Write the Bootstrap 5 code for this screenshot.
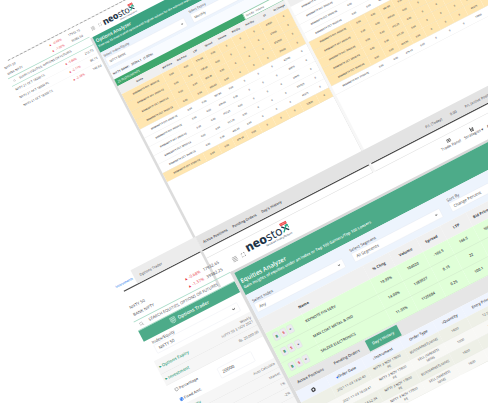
<!DOCTYPE html>
<html lang="en">
<head>
<meta charset="utf-8">
<title>neostox</title>
<link href="https://cdn.jsdelivr.net/npm/bootstrap@5.3.0/dist/css/bootstrap.min.css" rel="stylesheet">
<style>
html,body{width:488px;height:403px;overflow:hidden;background:#fff}
body{font-family:"Open Sans","Noto Sans",sans-serif;color:#3d4147;line-height:1.2}
.viewport{width:488px;height:403px}
/* both screens are laid out at four times size, then tilted and scaled */
.tilt{width:1900px;transform-origin:0 0;transform:matrix(.22215,-.11467,.11467,.22215,.38,63.95)}
.g{background:#3ba381;color:#fff}
.g2{background:#4dab89;color:#fff}
.down{color:#e8343f}
.topline{height:3px;margin-left:32px;background:repeating-linear-gradient(90deg,#999 0 12px,#ddd 12px 18px)}
.midline{height:5px;margin-left:22px;background:#4a4a4a}
.app1{height:969px}
.app2{height:1110px}
.side1{width:366px;padding:8px 10px 0 6px;font-size:12.2px}
.side2{width:434px}
.tick1{display:grid;grid-template-columns:200px 87px 1fr;height:26px;align-items:center}
.find{border-top:3px solid #a9dcc8;border-bottom:3px solid #a9dcc8}
.find1{height:37px;margin:3px -10px 0 -6px;padding-left:14px}
.watch{display:grid;grid-template-columns:222px 80px 1fr;height:35px;align-items:center;border-bottom:1px solid #eee}
.bar1{height:71px;padding-left:20px;padding-top:8px}
.brandname{font-family:"Noto Sans",sans-serif;letter-spacing:-.5px;color:#1e3448;line-height:1}
.brandname b{font-weight:800}
.edge{border-left:10px solid #dcdcdc}
.head1{height:70px;padding:9px 6px}
.head1 .t{font-size:19px;font-weight:600}
.head1 .s{font-size:11.3px;font-weight:600;white-space:nowrap}
.filt{background:#edf4fd}
.filt1{height:78px;padding:10px 6px 0;font-size:12.8px;gap:28px}
.filt1>div{width:354px}
.pick{background:#fff;border:1px solid #dbe0e8;border-radius:4px;color:#444}
.filt1 .pick{height:38px;padding:0 10px;margin-top:3px}
.info1{height:42px;padding-left:6px;background:#f8fbff;font-size:12px;font-weight:600}
.count{width:576px;height:30px;background:#3fa76d;color:#fff;font-size:12px;padding-left:8px}
.sortbox{width:172px;height:30px;border:2px solid #3fa76d;font-size:10.5px;background:#fff;padding-left:8px}
table.quotes{table-layout:fixed;border-collapse:collapse;width:748px;font-size:9.6px;font-weight:600}
.quotes th{height:36px;background:#efefef;font-weight:700;text-align:center;padding:0}
.quotes td{height:39.6px;padding:0;text-align:center;border-bottom:1px solid #e4e4e4}
.quotes td:first-child{text-align:left;padding-left:40px;white-space:nowrap}
.quotes tr.itm td{background:#ffe6b0;border-color:#e6d9b4}
.pane{height:776px;border-right:2px solid #ddd;border-bottom:2px solid #ddd}
.gut{width:10px;background:#f7f7f7}
.dock{height:60px;font-size:14.3px;font-weight:600}
.dock>div{padding-top:5px}
.dock .a{width:84px;color:#2f86ee;font-size:13px}
.dock .b{width:292px;background:#ececec;padding-left:24px;font-weight:400}
.dock .c{background:#e3e3e3;gap:23px;padding-left:18px}
.tick2{display:grid;grid-template-columns:245px 85px 1fr;height:32px;align-items:center;padding-left:12px;font-size:16.6px}
.find2{height:42px;margin-top:9px;padding-left:16px;font-size:16.1px;white-space:nowrap}
.trader{height:48px;font-size:19px;font-weight:600}
.idx{height:87px;padding:8px 32px 0 28px;font-size:17px}
.idx .pick{height:37px;padding:0 14px;margin-top:2px}
.acc{background:#f6f6f6;border-bottom:2px solid #e6e6e6;padding:0 8px;font-size:14.3px;color:#666}
.acc b{font-size:17px;color:#3ba381;font-weight:600}
.funds{height:97px;font-size:16px;padding:8px 72px 0 22px}
.ring{width:15px;height:15px;border:2px solid #777;border-radius:50%;background:#fff}
.ring.on{border-color:#2f78ee;background:#2f78ee;box-shadow:inset 0 0 0 2px #fff}
.amount{width:152px;height:44px;padding-left:14px;font-size:18px}
.bar2{height:125px;padding-left:30px}
.menuitem{font-size:15.8px;text-align:center;white-space:nowrap}
.edge2{border-left:14px solid #dcdcdc}
.edgetop{height:10px;background:#d9d9d9;margin-left:-14px}
.head2{height:100px;padding:26px 8px 0 8px}
.head2 .t{font-size:24.5px;font-weight:600}
.head2 .s{font-size:15.6px;font-weight:600;white-space:nowrap}
.filt2{height:110px;padding:23px 12px 0;gap:42px;font-size:16.5px}
.filt2>div{width:396px;flex:none}
.filt2 .pick{height:38px;padding:0 14px;margin-top:3px}
table.movers,table.orders{table-layout:fixed;border-collapse:collapse;width:1600px}
.movers{font-size:15px;font-weight:600}
.movers th{height:62px;background:#f0f0f0;padding:0;text-align:center;font-size:15.4px}
.movers td{height:67.3px;background:#e0ffd8;border-bottom:2px solid #cdebc6;padding:0 0 6px;text-align:center}
.movers th:nth-child(2),.movers td:nth-child(2){text-align:left}
.movers td:first-child{text-align:left;padding-left:22px}
.key{display:inline-block;width:25px;height:34px;line-height:32px;margin-right:6px;text-align:center;background:#ecebf0;border:1px solid #d2d2dc;border-radius:5px;font-size:15px;font-weight:700}
.tabs2{height:60px;background:#e6e6e6;font-size:15.4px;font-weight:600;padding-left:24px}
.tabs2 .on{height:48px;width:142px}
.orders{font-size:13.5px;line-height:1.45}
.orders th{height:48px;background:#eff4fe;padding:0;font-size:15px;text-align:center;font-weight:600}
.orders td{height:49px;padding:0;text-align:center;background:#f8f8f5;border-bottom:1px solid #e4e6de}
.orders tr:nth-child(odd) td{background:#eef0e7}
</style>
<script src="https://cdn.jsdelivr.net/npm/bootstrap@5.3.0/dist/js/bootstrap.bundle.min.js"></script>
</head>
<body>
<svg width="0" height="0" class="d-none">
  <symbol id="menu" viewBox="0 0 16 16"><path d="M1 2h14M1 6h14M1 10h14M1 14h14" stroke="#777" stroke-width="1.3"/></symbol>
  <symbol id="full" viewBox="0 0 16 16"><path d="M1 6V1h5M10 1h5v5M15 10v5h-5M6 15H1v-5" fill="none" stroke="#555" stroke-width="2"/></symbol>
  <symbol id="lens" viewBox="0 0 16 16"><circle cx="6.5" cy="6.5" r="5" fill="none" stroke="#888" stroke-width="1.3"/><path d="M10.5 10.5 15 15" stroke="#888" stroke-width="1.3"/></symbol>
  <symbol id="chev" viewBox="0 0 16 16"><path d="m2 5 6 6 6-6" fill="none" stroke="#333" stroke-width="2.4"/></symbol>
  <symbol id="xmark" viewBox="0 0 24 30"><path d="M3 10 20 28" stroke="#1e3448" stroke-width="4"/><path d="M3 28 21 9" stroke="#27a583" stroke-width="4"/><path d="M13 12h9v9" fill="none" stroke="#27a583" stroke-width="3"/><rect x="1" y="0" width="22" height="8" rx="2" fill="#ef4444"/><path d="M4 4h16" stroke="#ffd0d0" stroke-width="2" stroke-dasharray="3 1.5"/></symbol>
</svg>
<div class="viewport overflow-hidden">
<div class="tilt">
  <div class="topline"></div>
  <div class="app1 d-flex">
    <aside class="side1 flex-shrink-0">
      <div class="tick1"><span>NIFTY 50</span><span class="down">▲ &nbsp;-0.68%</span><span>17932.15</span></div>
      <div class="tick1"><span>BANK NIFTY</span><span class="down">▲ &nbsp;-1.00%</span><span>39382.50</span></div>
      <div class="find find1 d-flex align-items-center gap-2"><svg width="12" height="12"><use href="#lens"/></svg><span class="ms-2">SEARCH EQUITIES, OPTIONS OR FUTURES</span></div>
      <div class="watch"><span>NIFTY 21 OCT 18200 CE</span><span class="down">▲ -3.80%</span><span class="text-end">212.75</span></div>
      <div class="watch"><span>NIFTY 21 OCT 18000 PE</span><span class="down">▲ -2.11%</span><span class="text-end">86.15</span></div>
      <div class="watch border-0"><span>NIFTY 21 OCT 18300 CE</span><span class="down">▲ -2.38%</span><span class="text-end">146.60</span></div>
    </aside>
    <main class="flex-grow-1">
      <div class="bar1 d-flex align-items-center">
        <svg width="18" height="18" class="me-3"><use href="#menu"/></svg>
        <svg width="13" height="13" class="me-2"><use href="#full"/></svg>
        <div class="brandname" style="font-size:36px"><div class="d-flex align-items-end"><span><b>neo</b>sto</span><svg width="24" height="34" class="mb-1"><use href="#xmark"/></svg></div><div style="font-size:7px;text-align:right">Simulated Trading Platform</div></div>
      </div>
      <div class="edge" id="chain">
        <div class="head1 g"><div class="t">Options Analyzer</div><div class="s mt-1">View top 25 most traded options with highest volume for the selected expiry</div></div>
        <div class="filt filt1 d-flex">
          <div>Select Index/Equity<div class="pick d-flex align-items-center justify-content-between">NIFTY BANK<svg width="11" height="11"><use href="#chev"/></svg></div></div>
          <div>Select Expiry<div class="pick d-flex align-items-center justify-content-between">Monthly<svg width="11" height="11"><use href="#chev"/></svg></div></div>
        </div>
        <div class="info1 d-flex align-items-center">NIFTY BANK: &nbsp; 39394.1 &nbsp; (1.00%)</div>
        <div class="d-flex"><div class="count d-flex align-items-center">25 INSTRUMENTS</div><div class="sortbox d-flex align-items-center">Sort By : Volume</div></div>
        <div class="d-flex">
          <div class="pane"><table class="quotes" id="q1"></table></div>
          <div class="gut"></div>
          <div class="pane"><table class="quotes" id="q2"></table></div>
        </div>
        <div style="height:126px"></div>
      </div>
    </main>
  </div>
  <div class="dock d-flex">
    <div class="a d-flex align-items-center">Instruments</div>
    <div class="b d-flex align-items-center">Options Trader</div>
    <div class="c d-flex align-items-center flex-grow-1"><span>Active Positions</span><span>Pending Orders</span><span>Day's History</span><span class="d-flex" style="margin-left:625px;gap:38px;font-weight:400"><span>P/L (Today)</span><span>0.00</span><span>P/L (Active Positions)</span></span></div>
  </div>
  <div class="midline"></div>

  <div class="app2 d-flex">
    <aside class="side2 flex-shrink-0">
      <div style="height:51px"></div>
      <div class="tick2"><span>NIFTY 50</span><span class="down">▲ -0.68%</span><span>17932.65</span></div>
      <div class="tick2"><span>BANK NIFTY</span><span class="down">▲ -1.37%</span><span>39382.25</span></div>
      <div class="find find2 d-flex align-items-center"><svg width="19" height="19" class="me-4"><use href="#lens"/></svg>SEARCH EQUITIES, OPTIONS OR FUTURES</div>
      <div class="trader g2 d-flex align-items-center justify-content-center gap-2"><svg width="28" height="28" viewBox="0 0 16 16"><path d="M2 1h12v8c0 3-3 5-6 6-3-1-6-3-6-6zM5 1v12M8 1v14M11 1v12M2 5h12M2 9h12" fill="none" stroke="#d8f2e8" stroke-width="1"/></svg>Options Trader</div>
      <div class="idx">Index/Equity<div class="pick d-flex align-items-center justify-content-between">NIFTY 50<svg width="15" height="15"><use href="#chev"/></svg></div></div>
      <div class="acc d-flex justify-content-between align-items-center" style="height:62px"><b>▸ Options Expiry</b><div class="text-end lh-sm">Weekly<br>NIFTY 50 3 NOV 2021</div></div>
      <div class="acc d-flex justify-content-between align-items-center" style="height:49px"><b>▸ Investment</b><span>Rs. 20,000.00</span></div>
      <div class="funds d-flex align-items-center justify-content-between">
        <div class="d-flex flex-column gap-4"><span class="d-flex align-items-center gap-1"><i class="ring"></i>Percentage</span><span class="d-flex align-items-center gap-1"><i class="ring on"></i>Fixed Amt.</span></div>
        <div class="pick amount d-flex align-items-center">20000</div>
      </div>
      <div class="acc d-flex justify-content-between align-items-center" style="height:44px"><b>▸ Quantity</b><span>Auto Calculate</span></div>
      <div class="acc d-flex justify-content-between align-items-center" style="height:44px"><b>▸ Order Type</b><span>Market</span></div>
      <div class="acc d-flex justify-content-between align-items-center" style="height:44px"><b>▸ Target</b><span>1%</span></div>
      <div class="acc d-flex justify-content-between align-items-center" style="height:44px"><b>▸ Stoploss</b><span>-2%</span></div>
      <div class="acc" style="height:400px"></div>
    </aside>
    <main class="flex-grow-1">
      <div class="bar2 d-flex align-items-center">
        <svg width="24" height="24" class="me-3 mt-5"><use href="#menu"/></svg>
        <svg width="18" height="18" class="me-2 mt-5"><use href="#full"/></svg>
        <div class="brandname ms-1 mt-3" style="font-size:49px"><div class="d-flex align-items-end"><span><b>neo</b>sto</span><svg width="33" height="48" class="mb-1"><use href="#xmark"/></svg></div><div style="font-size:10px;text-align:right">Simulated Trading Platform</div></div>
        <div class="d-flex gap-3 menuitem" style="margin-left:682px;margin-top:12px">
          <div><svg width="18" height="16" viewBox="0 0 18 16" class="d-block mx-auto mb-1"><path d="M1 3h16v11H1zM1 8h16M9 3v11" fill="none" stroke="#333" stroke-width="2"/></svg>Trade Panel</div>
          <div><svg width="20" height="20" viewBox="0 0 20 20" class="d-block mx-auto"><path d="M4 1v17h12M5 10h8v7M13 5l4 5" fill="none" stroke="#222" stroke-width="3"/></svg>Strategies ▾</div>
          <div class="pt-3 mt-1">Analyzers ▾</div>
        </div>
      </div>
      <div class="edge2">
        <div class="edgetop"></div>
        <div class="head2 g2"><div class="t">Equities Analyzer</div><div class="s mt-1">Gain insights of equities under an Index or Top 100 Gainers/Top 100 Loosers</div></div>
        <div class="filt filt2 d-flex">
          <div>Select Index<div class="pick d-flex align-items-center justify-content-between">Any<svg width="13" height="13"><use href="#chev"/></svg></div></div>
          <div>Select Segment<div class="pick d-flex align-items-center justify-content-between">All Segments<svg width="13" height="13"><use href="#chev"/></svg></div></div>
          <div>Sort By<div class="pick d-flex align-items-center justify-content-between">Change Percent<svg width="13" height="13"><use href="#chev"/></svg></div></div>
        </div>
        <table class="movers" id="mv"></table>
        <div class="tabs2 d-flex align-items-center"><span style="width:164px">Active Positions</span><span style="width:151px">Pending Orders</span><span class="on g2 d-flex align-items-center justify-content-center">Day's History</span></div>
        <table class="orders" id="od"></table>
      </div>
    </main>
  </div>
</div>
</div>
<script>
const cols = w => '<colgroup>' + w.map(x => `<col width="${x}">`).join('') + '</colgroup>';
const qw = [180,68,62,60,60,62,62,62,72,60];
const qh = ['Name','Bid Price','Ask Price','LTP','Spread','Volume','Bid Qty','Ask Qty','OI','OI Change'];
const strikes = [38000,39500,39000,39200,40000,40500,39600,38500,39400,37000];
const big = ['575.00','728.00','592.05','660.65','387.80','429.00','472.25','511.25','453.90','479.10'];
const oi = ['47825','27425','672500','35500','62700','29875','20975','337925','45275','72825'];
function quotes(id, shade, kind){
  document.getElementById(id).innerHTML = cols(qw) + '<tr>' + qh.map(h => `<th>${h}</th>`).join('') + '</tr>' +
    strikes.map((s,i) => `<tr class="${shade(i) ? 'itm' : ''}"><td>BANKNIFTY OCT ${s} ${kind}</td>` +
      ['0.00','0.00',big[i],'0.00','0','0','0',oi[i],'0'].map(v => `<td>${v}</td>`).join('') + '</tr>').join('');
}
quotes('q1', i => i < 4 || i === 9, 'CE');
quotes('q2', i => i > 3 && i < 9, 'PE');
const mw = [164,305,116,124,108,116,104,200,363];
document.getElementById('mv').innerHTML = cols(mw) + '<tr>' + ['','Name','% Chng','Volume','Spread','LTP','Bid Price','',''].map(h => `<th>${h}</th>`).join('') + '</tr>' +
  [['KEYNOTE FIN SERV','19.99%','104020','-166.5','166.5','166.5'],['MAN COAT METAL & IND','14.00%','1389927','0.15','22','22'],['SALZER ELECTRONICS','11.93%','1125684','0.25','100.1','100.1']]
  .map(r => '<tr><td><span class="key text-success">B</span><span class="key text-danger">S</span><span class="key">+</span></td>' + r.map(v => `<td>${v}</td>`).join('') + '<td></td><td></td></tr>').join('');
const ow = [134,160,170,152,128,152,704];
document.getElementById('od').innerHTML = cols(ow) + '<thead><tr><th><svg width="20" height="20" viewBox="0 0 20 20"><circle cx="10" cy="10" r="6" fill="none" stroke="#333" stroke-width="4"/><circle cx="10" cy="10" r="8.5" fill="none" stroke="#333" stroke-width="3" stroke-dasharray="3 3.6"/></svg></th><th><span class="text-primary">▾</span>Order Date</th><th>↕Instrument</th><th>Order Type</th><th>↕Quantity</th><th>Entry Price</th><th></th></tr></thead><tbody>' +
  [['14:50:40','BUY(MARKET),MIMS','1600','12.55'],['16:03:41','SELL (MARKET)<br>MIMS','1000','12.90'],['14:52:34','BUY(MARKET),MIMS','1600','11.45'],['15:03:47','SELL (MARKET)<br>MIMS','1600','12.10']]
  .map(r => `<tr><td></td><td>2021-11-03 ${r[0]}</td><td>NIFTY 3 NOV 17800<br>PE</td><td>${r[1]}</td><td>${r[2]}</td><td>${r[3]}</td><td></td></tr>`).join('') + '</tbody>';
</script>
</body>
</html>
